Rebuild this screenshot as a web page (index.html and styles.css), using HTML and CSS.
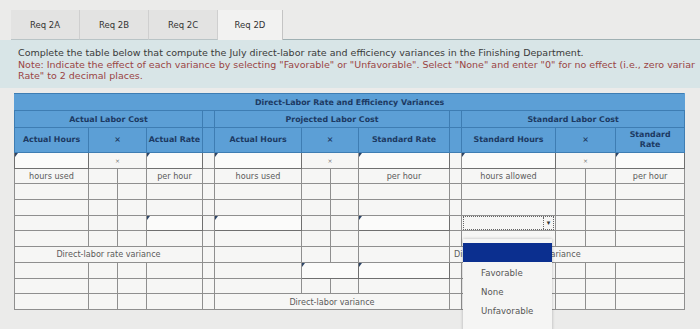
FILE: index.html
```html
<!DOCTYPE html>
<html lang="en">
<head>
  <meta charset="UTF-8">
  <title>Req 2D</title>
  <link rel="stylesheet" href="styles.css">
</head>
<body>

  <div class="tabs">
    <div class="tab">Req 2A</div>
    <div class="tab">Req 2B</div>
    <div class="tab">Req 2C</div>
    <div class="tab active">Req 2D</div>
    <div class="tab-rest"></div>
  </div>

  <div class="instrucoes">
    <p class="linha">Complete the table below that compute the July direct-labor rate and efficiency variances in the Finishing Department.</p>
    <p class="linha nota">Note: Indicate the effect of each variance by selecting "Favorable" or "Unfavorable". Select "None" and enter "0" for no effect (i.e., zero variar</p>
    <p class="linha nota">Rate" to 2 decimal places.</p>
  </div>

  <table class="variancias">
    <colgroup>
      <col style="width:74px"><col style="width:29px"><col style="width:29px"><col style="width:56px"><col style="width:12px">
      <col style="width:87px"><col style="width:29px"><col style="width:28px"><col style="width:91px"><col style="width:12px">
      <col style="width:94px"><col style="width:30px"><col style="width:30px"><col style="width:69px">
    </colgroup>
    <thead>
      <tr class="h1">
        <th colspan="14">Direct-Labor Rate and Efficiency Variances</th>
      </tr>
      <tr class="h2">
        <th colspan="4">Actual Labor Cost</th>
        <th></th>
        <th colspan="4">Projected Labor Cost</th>
        <th></th>
        <th colspan="4">Standard Labor Cost</th>
      </tr>
      <tr class="h3">
        <th>Actual Hours</th>
        <th colspan="2">×</th>
        <th>Actual Rate</th>
        <th></th>
        <th>Actual Hours</th>
        <th colspan="2">×</th>
        <th>Standard Rate</th>
        <th></th>
        <th>Standard Hours</th>
        <th colspan="2">×</th>
        <th>Standard<br>Rate</th>
      </tr>
    </thead>
    <tbody>
      <tr>
        <td class="in"></td><td colspan="2" class="vezes">×</td><td class="in"></td><td></td>
        <td class="in"></td><td colspan="2" class="vezes">×</td><td class="in"></td><td></td>
        <td class="in"></td><td colspan="2" class="vezes">×</td><td class="in"></td>
      </tr>
      <tr class="rotulos">
        <td>hours used</td><td></td><td></td><td>per hour</td><td></td>
        <td>hours used</td><td></td><td></td><td>per hour</td><td></td>
        <td>hours allowed</td><td></td><td></td><td>per hour</td>
      </tr>
      <tr>
        <td></td><td></td><td></td><td></td><td></td>
        <td></td><td></td><td></td><td></td><td></td>
        <td></td><td></td><td></td><td></td>
      </tr>
      <tr>
        <td></td><td></td><td></td><td></td><td></td>
        <td></td><td></td><td></td><td></td><td></td>
        <td></td><td></td><td></td><td></td>
      </tr>
      <tr>
        <td></td><td></td><td></td><td class="in"></td><td></td>
        <td class="in"></td><td></td><td></td><td class="in"></td><td></td>
        <td class="sel-cell">
          <div class="select"><span class="seta">▾</span></div>
          <div class="menu">
            <div class="opcao marcada"></div>
            <div class="opcao">Favorable</div>
            <div class="opcao">None</div>
            <div class="opcao">Unfavorable</div>
          </div>
        </td>
        <td></td><td></td><td></td>
      </tr>
      <tr>
        <td></td><td></td><td></td><td></td><td></td>
        <td></td><td></td><td></td><td></td><td></td>
        <td></td><td></td><td></td><td></td>
      </tr>
      <tr class="rotulos">
        <td colspan="4">Direct-labor rate variance</td><td></td>
        <td></td><td></td><td></td><td></td>
        <td colspan="5" class="esq">Direct-labor efficiency variance</td>
      </tr>
      <tr>
        <td></td><td></td><td></td><td></td><td></td>
        <td></td><td colspan="2" class="in"></td><td class="in"></td><td></td>
        <td></td><td></td><td></td><td></td>
      </tr>
      <tr>
        <td></td><td></td><td></td><td></td><td></td>
        <td></td><td></td><td></td><td></td><td></td>
        <td></td><td></td><td></td><td></td>
      </tr>
      <tr class="rotulos">
        <td></td><td></td><td></td><td></td><td></td>
        <td colspan="4">Direct-labor variance</td><td></td>
        <td></td><td></td><td></td><td></td>
      </tr>
    </tbody>
  </table>

</body>
</html>
```

FILE: styles.css
```css
* {
  box-sizing: border-box;
}

html, body {
  margin: 0;
  padding: 0;
  overflow: hidden;
}

body {
  font-family: "DejaVu Sans", Verdana, sans-serif;
  background: #ebebea;
  color: #333;
  width: 700px;
  height: 329px;
  position: relative;
}

.tabs {
  display: flex;
  margin-top: 10px;
  height: 30px;
  padding-left: 11px;
}

.tab {
  width: 69px;
  background: #e3e3e2;
  border-right: 1px solid #cfcfcf;
  border-bottom: 1px solid #b9c4c6;
  font-size: 8.5px;
  color: #333;
  display: flex;
  align-items: center;
  justify-content: center;
}

.tab.active {
  width: 65px;
  background: #f2f2f1;
  border-right: 1px solid #c4c4c4;
  border-bottom: none;
}

.tab-rest {
  flex: 1;
  border-bottom: 1px solid #9fb0b3;
}

.instrucoes {
  background: #d8e5e7;
  height: 48px;
  padding: 7px 0 0 18px;
  overflow: hidden;
}

.linha {
  margin: 0;
  font-size: 9.5px;
  line-height: 11.5px;
  white-space: nowrap;
  color: #3a3a3a;
}

.linha.nota {
  color: #9a4444;
}

.variancias {
  margin: 5px 0 0 14px;
  border-collapse: collapse;
  table-layout: fixed;
  width: 670px;
  background: #f6f6f5;
}

.variancias th {
  background: #5c9fd6;
  color: #1c3a63;
  font-weight: bold;
  font-size: 7.9px;
  border: 1px solid #3e7db3;
  padding: 0 1px;
  text-align: center;
  white-space: nowrap;
}

.variancias .h1 th {
  height: 17px;
  border-left-color: #5c9fd6;
  border-right-color: #5c9fd6;
}

.variancias .h2 th {
  height: 17px;
}

.variancias .h3 th {
  height: 25px;
  line-height: 10px;
}

.variancias td {
  height: 15.7px;
  border: 1px solid #8f8f8f;
  font-size: 8.1px;
  color: #5a5a5a;
  text-align: center;
  padding: 0;
  white-space: nowrap;
  overflow: visible;
}

.variancias td.vezes {
  font-size: 6px;
  color: #777;
}

.variancias td.in {
  border: 1.5px solid #6f6f6f;
  background: #fbfbfa;
  position: relative;
}

.variancias td.in::before {
  content: "";
  position: absolute;
  left: 0;
  top: 0;
  border-top: 4px solid #2c4466;
  border-right: 3px solid transparent;
}

.variancias td.esq {
  text-align: left;
  padding-left: 4px;
}

.sel-cell {
  position: relative;
}

.select {
  height: 14px;
  margin: 0 1px;
  border: 1px dotted #666;
  position: relative;
}

.seta {
  position: absolute;
  right: 0;
  top: 0;
  width: 10px;
  height: 12px;
  border-left: 1px dotted #666;
  font-size: 7px;
  line-height: 12px;
  color: #333;
}

.menu {
  position: absolute;
  left: 1px;
  top: 23px;
  width: 89px;
  height: 100px;
  background: #f5f5f4;
  box-shadow: 0 0 3px rgba(0, 0, 0, 0.25);
  padding-top: 4px;
  text-align: left;
  z-index: 2;
}

.opcao {
  height: 19px;
  line-height: 19px;
  padding-left: 18px;
  font-size: 8.6px;
  color: #555;
}

.opcao.marcada {
  background: #0b2f8f;
  margin-bottom: 2px;
}
```
